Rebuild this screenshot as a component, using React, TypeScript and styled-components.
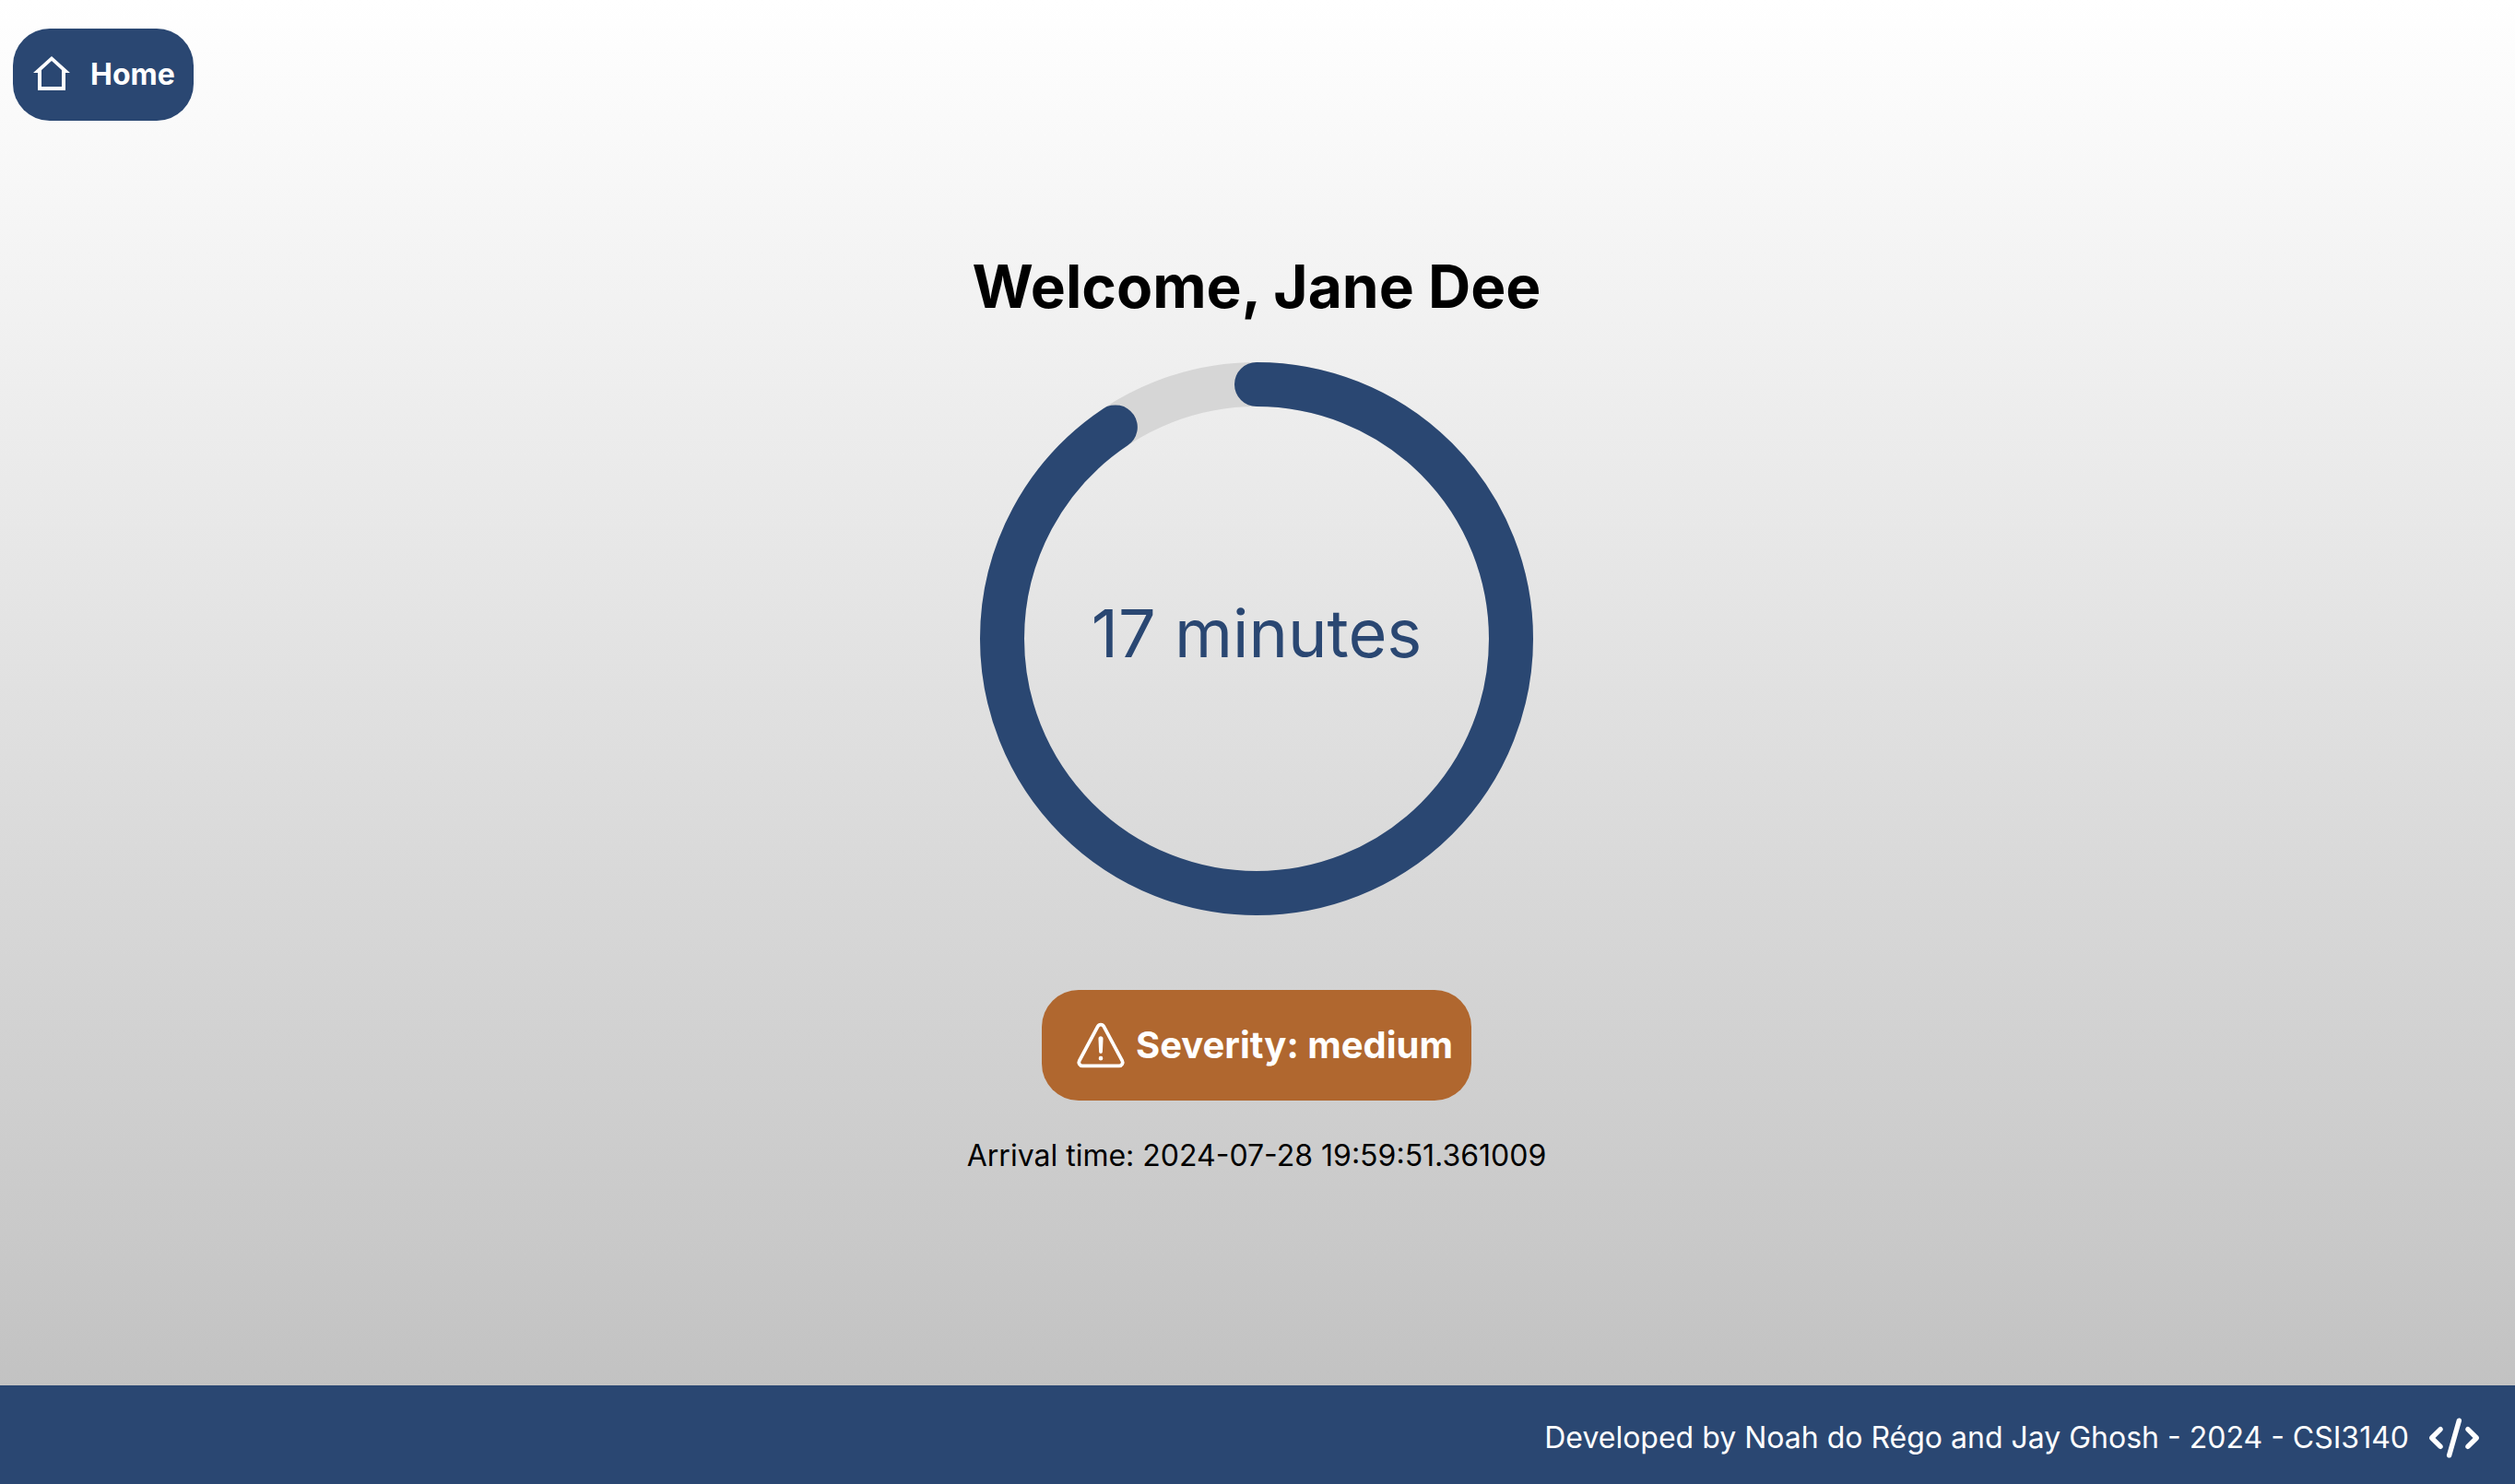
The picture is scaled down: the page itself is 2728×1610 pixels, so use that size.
import React from "react";
import styled, { createGlobalStyle } from "styled-components";
import { FaCode } from "react-icons/fa6";
import { IoWarningOutline } from "react-icons/io5";

const navy = "#2a4772";

const GlobalStyle = createGlobalStyle`
  * { box-sizing: border-box; }
  body { margin: 0; font-family: Inter, "Liberation Sans", sans-serif; font-size: 32px; line-height: 40px; color: #000; }
`;

const Page = styled.div`
  min-height: 100vh;
  display: flex;
  flex-direction: column;
  background: linear-gradient(to bottom, #fff, #bebebe);
`;

const Header = styled.header`
  padding: 31px 14px 0;
`;

const HomeButton = styled.button`
  display: inline-flex;
  align-items: center;
  gap: 22px;
  height: 100px;
  padding: 0 20px 0 22px;
  border: 0;
  border-radius: 40px;
  background: ${navy};
  color: #fff;
  font: inherit;
  font-weight: 700;
  cursor: pointer;
`;

const Main = styled.main`
  flex: 1;
  display: flex;
  flex-direction: column;
  align-items: center;
  padding: 140px 22px 40px 20px;
`;

const Title = styled.h1`
  margin: 0 0 42px;
  font-size: 64px;
  line-height: 80px;
  font-weight: 700;
`;

const Gauge = styled.svg`
  display: block;
  width: 600px;
  height: 600px;
  margin-bottom: 81px;
`;

const GaugeText = styled.text`
  fill: ${navy};
  font-size: 12px;
  text-anchor: middle;
  dominant-baseline: middle;
`;

const Severity = styled.div`
  display: flex;
  align-items: center;
  gap: 8px;
  height: 120px;
  padding: 0 20px 0 34px;
  margin-bottom: 40px;
  border-radius: 40px;
  background: #b0672f;
  color: #fff;
  font-size: 40px;
  font-weight: 700;
`;

const Arrival = styled.p`
  margin: 0;
`;

const Footer = styled.footer`
  display: flex;
  align-items: center;
  justify-content: flex-end;
  gap: 22px;
  height: 107px;
  padding: 6px 39px 0;
  background: ${navy};
  color: #fff;
`;

const HomeIcon = () => (
  <svg width="40" height="40" viewBox="0 0 40 40" fill="currentColor" fillRule="evenodd" aria-hidden="true">
    <path d="M20 0 40 18H35V37H5V18H0ZM20 5 31 15V33H9V15Z" />
  </svg>
);

const fraction = 0.906;
const ring = 2 * Math.PI * 46;

export default function App() {
  return (
    <Page>
      <GlobalStyle />
      <Header>
        <HomeButton type="button">
          <HomeIcon />
          Home
        </HomeButton>
      </Header>
      <Main>
        <Title>Welcome, Jane Dee</Title>
        <Gauge viewBox="0 0 100 100" role="img" aria-label="17 minutes">
          <circle cx="50" cy="50" r="46" fill="none" stroke="#d6d6d6" strokeWidth="8" />
          <circle
            cx="50"
            cy="50"
            r="46"
            fill="none"
            stroke={navy}
            strokeWidth="8"
            strokeLinecap="round"
            strokeDasharray={`${ring * fraction} ${ring}`}
            transform="rotate(-90 50 50)"
          />
          <GaugeText x="50" y="50">17 minutes</GaugeText>
        </Gauge>
        <Severity>
          <IoWarningOutline size={60} aria-hidden="true" />
          Severity: medium
        </Severity>
        <Arrival>Arrival time: 2024-07-28 19:59:51.361009</Arrival>
      </Main>
      <Footer>
        <span>Developed by Noah do Régo and Jay Ghosh - 2024 - CSI3140</span>
        <FaCode size={54} aria-hidden="true" />
      </Footer>
    </Page>
  );
}
